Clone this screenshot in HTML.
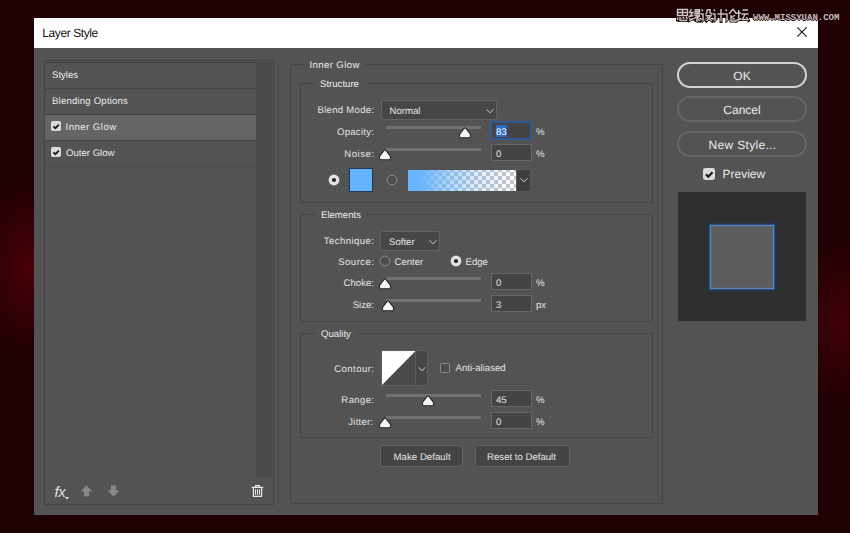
<!DOCTYPE html><html><head><meta charset="utf-8"><style>
html,body{margin:0;padding:0;width:850px;height:533px;overflow:hidden;background:#200104;}
body{position:relative;font-family:"Liberation Sans",sans-serif;}
.t{position:absolute;white-space:nowrap;font-family:"Liberation Sans",sans-serif;text-rendering:geometricPrecision;}
.b{position:absolute;}
</style></head><body>
<div class="b" style="left:0;top:0;width:850px;height:533px;background:radial-gradient(ellipse 55px 90px at 30px 268px, rgba(75,1,6,0.95), rgba(0,0,0,0) 100%), radial-gradient(ellipse 50px 85px at 842px 322px, rgba(70,1,6,0.85), rgba(0,0,0,0) 100%), #200104;"></div>
<div class="b" style="left:34px;top:18px;width:783.5px;height:497px;background:#535353;"></div>
<div class="b" style="left:34px;top:18px;width:783.5px;height:30px;background:#ffffff;"></div>
<div class="t" style="left:42.3px;top:26.84px;font-size:12px;line-height:12px;height:12px;color:#111111;letter-spacing:-0.42px;">Layer Style</div>
<svg class="b" style="left:796px;top:26px" width="12" height="12" viewBox="0 0 12 12"><path d="M1.3 1.3 L10.7 10.7 M10.7 1.3 L1.3 10.7" stroke="#111" stroke-width="1.1"/></svg>
<div class="b" style="left:44px;top:60px;width:230px;height:445px;border:1px solid #444444;box-sizing:border-box;"></div>
<div class="b" style="left:256px;top:62px;width:16px;height:415px;background:#4a4a4a;"></div>
<div class="b" style="left:45px;top:62px;width:211px;height:1px;background:#444444;"></div>
<div class="b" style="left:45px;top:88px;width:211px;height:1px;background:#434343;"></div>
<div class="b" style="left:45px;top:114px;width:211px;height:1px;background:#434343;"></div>
<div class="b" style="left:45px;top:115px;width:211px;height:25px;background:#656565;"></div>
<div class="b" style="left:45px;top:140px;width:211px;height:1px;background:#434343;"></div>
<div class="b" style="left:45px;top:166px;width:211px;height:1px;background:#4a4a4a;"></div>
<div class="t" style="left:52px;top:70.87px;font-size:9.6px;line-height:9.6px;height:9.6px;color:#ececec;letter-spacing:0px;">Styles</div>
<div class="t" style="left:52px;top:96.87px;font-size:9.6px;line-height:9.6px;height:9.6px;color:#ececec;letter-spacing:0.19px;">Blending Options</div>
<svg class="b" style="left:51px;top:121px" width="10" height="10" viewBox="0 0 10 10"><rect x="0" y="0" width="10" height="10" rx="1.8" fill="#dadada"/><path d="M2.4 5.3 L4.4 7.2 L7.9 3.6" fill="none" stroke="#1a1a1a" stroke-width="1.8"/></svg>
<div class="t" style="left:65.5px;top:122.87px;font-size:9.6px;line-height:9.6px;height:9.6px;color:#ececec;letter-spacing:0.47px;">Inner Glow</div>
<svg class="b" style="left:51px;top:147px" width="10" height="10" viewBox="0 0 10 10"><rect x="0" y="0" width="10" height="10" rx="1.8" fill="#dadada"/><path d="M2.4 5.3 L4.4 7.2 L7.9 3.6" fill="none" stroke="#1a1a1a" stroke-width="1.8"/></svg>
<div class="t" style="left:66px;top:148.87px;font-size:9.6px;line-height:9.6px;height:9.6px;color:#ececec;letter-spacing:0px;">Outer Glow</div>
<div class="t" style="left:54.5px;top:484.5px;font-size:15px;line-height:15px;height:15px;color:#e0e0e0;font-style:italic;font-family:'Liberation Sans',sans-serif;letter-spacing:-0.3px;">fx</div>
<svg class="b" style="left:64.5px;top:497px" width="4" height="3" viewBox="0 0 4 3"><path d="M0 0 L4 0 L2 2.5Z" fill="#e8e8e8"/></svg>
<svg class="b" style="left:80px;top:484.5px" width="13" height="12" viewBox="0 0 13 12"><path d="M6.5 0.5 L12.5 6.5 L9 6.5 L9 11.5 L4 11.5 L4 6.5 L0.5 6.5Z" fill="#888"/></svg>
<svg class="b" style="left:107px;top:485px" width="13" height="12" viewBox="0 0 13 12"><path d="M6.5 11.5 L12.5 5.5 L9 5.5 L9 0.5 L4 0.5 L4 5.5 L0.5 5.5Z" fill="#888"/></svg>
<svg class="b" style="left:251px;top:484px" width="13" height="14" viewBox="0 0 13 14"><path d="M0.8 3.4 H12.2 M4.6 3.2 V1.6 H8.4 V3.2 M2.4 3.6 V12.4 H10.6 V3.6" fill="none" stroke="#e8e8e8" stroke-width="1.2"/><path d="M4.5 5.2 V10.8 M6.5 5.2 V10.8 M8.5 5.2 V10.8" fill="none" stroke="#e8e8e8" stroke-width="1"/></svg>
<div class="b" style="left:290px;top:64px;width:373px;height:440px;border:1px solid #444444;box-sizing:border-box;"></div>
<div class="b" style="left:304.5px;top:63px;width:60px;height:3px;background:#535353;"></div>
<div class="t" style="left:309.5px;top:60.87px;font-size:9.6px;line-height:9.6px;height:9.6px;color:#ececec;letter-spacing:0.39px;">Inner Glow</div>
<div class="b" style="left:300px;top:83px;width:353px;height:120px;border:1px solid #444444;box-sizing:border-box;"></div>
<div class="b" style="left:315px;top:82px;width:52px;height:3px;background:#535353;"></div>
<div class="t" style="left:320px;top:79.87px;font-size:9.6px;line-height:9.6px;height:9.6px;color:#ececec;letter-spacing:0px;">Structure</div>
<div class="t" style="right:475.74px;top:105.87px;font-size:9.6px;line-height:9.6px;height:9.6px;color:#e4e4e4;letter-spacing:0.26px;">Blend Mode:</div>
<div class="b" style="left:381px;top:100px;width:116px;height:20px;background:#464646;border:1px solid #626262;box-sizing:border-box;border-radius:2px;"></div>
<div class="t" style="left:389.5px;top:106.87px;font-size:9.6px;line-height:9.6px;height:9.6px;color:#e6e6e6;letter-spacing:0px;">Normal</div>
<svg class="b" style="left:484.5px;top:107px" width="10" height="8" viewBox="0 0 10 8"><path d="M1.5 2.3 L5 5.8 L8.5 2.3" fill="none" stroke="#d0d0d0" stroke-width="1"/></svg>
<div class="t" style="right:475.73px;top:127.87px;font-size:9.6px;line-height:9.6px;height:9.6px;color:#e4e4e4;letter-spacing:0.27px;">Opacity:</div>
<div class="b" style="left:386px;top:126px;width:95px;height:3px;background:#717171;"></div>
<svg class="b" style="left:458px;top:127px" width="14" height="12" viewBox="0 0 14 12"><path d="M7 1 C7.5 1 7.8 1.3 8.1 1.7 L11.9 6.6 C12.3 7.1 12.5 7.5 12.5 8.1 L12.5 9.3 C12.5 10.3 12 10.8 11 10.8 L3 10.8 C2 10.8 1.5 10.3 1.5 9.3 L1.5 8.1 C1.5 7.5 1.7 7.1 2.1 6.6 L5.9 1.7 C6.2 1.3 6.5 1 7 1Z" fill="#f4f4f4" stroke="#262626" stroke-width="1.1"/></svg>
<div class="b" style="left:490px;top:121px;width:42px;height:19px;border:2px solid #2c5a96;box-sizing:border-box;background:#444444;"></div>
<div class="b" style="left:496px;top:125px;width:11px;height:12px;background:#2d6cc6;"></div>
<div class="t" style="left:496px;top:127.87px;font-size:9.6px;line-height:9.6px;height:9.6px;color:#ffffff;letter-spacing:0px;">83</div>
<div class="t" style="left:536px;top:127.87px;font-size:9.6px;line-height:9.6px;height:9.6px;color:#e4e4e4;letter-spacing:0px;">%</div>
<div class="t" style="right:475.50px;top:149.87px;font-size:9.6px;line-height:9.6px;height:9.6px;color:#e4e4e4;letter-spacing:0.5px;">Noise:</div>
<div class="b" style="left:386px;top:148px;width:95px;height:3px;background:#717171;"></div>
<svg class="b" style="left:378px;top:149px" width="14" height="12" viewBox="0 0 14 12"><path d="M7 1 C7.5 1 7.8 1.3 8.1 1.7 L11.9 6.6 C12.3 7.1 12.5 7.5 12.5 8.1 L12.5 9.3 C12.5 10.3 12 10.8 11 10.8 L3 10.8 C2 10.8 1.5 10.3 1.5 9.3 L1.5 8.1 C1.5 7.5 1.7 7.1 2.1 6.6 L5.9 1.7 C6.2 1.3 6.5 1 7 1Z" fill="#f4f4f4" stroke="#262626" stroke-width="1.1"/></svg>
<div class="b" style="left:491px;top:144px;width:41px;height:17px;background:#444444;border:1px solid #666666;box-sizing:border-box;"></div>
<div class="t" style="left:496px;top:149.87px;font-size:9.6px;line-height:9.6px;height:9.6px;color:#e4e4e4;letter-spacing:0px;">0</div>
<div class="t" style="left:536px;top:149.87px;font-size:9.6px;line-height:9.6px;height:9.6px;color:#e4e4e4;letter-spacing:0px;">%</div>
<svg class="b" style="left:327.5px;top:174px" width="12" height="12" viewBox="0 0 12 12"><circle cx="6" cy="6" r="5.4" fill="#e2e2e2"/><circle cx="6" cy="6" r="2.1" fill="#262626"/></svg>
<div class="b" style="left:349px;top:168px;width:24px;height:24px;background:#1e3650;"></div>
<div class="b" style="left:350px;top:169px;width:22px;height:22px;background:#66b4ff;"></div>
<svg class="b" style="left:385.5px;top:174px" width="12" height="12" viewBox="0 0 12 12"><circle cx="6" cy="6" r="4.9" fill="#4c4c4c" stroke="#8c8c8c" stroke-width="1"/></svg>
<div class="b" style="left:408px;top:170px;width:108px;height:21px;background:linear-gradient(to right, rgba(102,180,255,1) 0%, rgba(102,180,255,0.97) 12%, rgba(102,180,255,0.62) 32%, rgba(102,180,255,0.25) 62%, rgba(102,180,255,0) 100%), repeating-conic-gradient(#c6c6c6 0 25%, #ffffff 0 50%) 2px 2px/8px 8px;"></div>
<div class="b" style="left:516px;top:169px;width:15px;height:23px;background:#3e3e3e;border:1px solid #585858;box-sizing:border-box;"></div>
<svg class="b" style="left:518.5px;top:176px" width="10" height="8" viewBox="0 0 10 8"><path d="M1.5 2.3 L5 5.8 L8.5 2.3" fill="none" stroke="#d0d0d0" stroke-width="1"/></svg>
<div class="b" style="left:300px;top:214px;width:353px;height:108px;border:1px solid #444444;box-sizing:border-box;"></div>
<div class="b" style="left:316px;top:213px;width:50px;height:3px;background:#535353;"></div>
<div class="t" style="left:321px;top:210.87px;font-size:9.6px;line-height:9.6px;height:9.6px;color:#ececec;letter-spacing:0px;">Elements</div>
<div class="t" style="right:475.56px;top:236.87px;font-size:9.6px;line-height:9.6px;height:9.6px;color:#e4e4e4;letter-spacing:0.44px;">Technique:</div>
<div class="b" style="left:380px;top:231px;width:60px;height:20px;background:#464646;border:1px solid #626262;box-sizing:border-box;border-radius:2px;"></div>
<div class="t" style="left:389px;top:237.87px;font-size:9.6px;line-height:9.6px;height:9.6px;color:#e6e6e6;letter-spacing:0px;">Softer</div>
<svg class="b" style="left:427.5px;top:237.5px" width="10" height="8" viewBox="0 0 10 8"><path d="M1.5 2.3 L5 5.8 L8.5 2.3" fill="none" stroke="#d0d0d0" stroke-width="1"/></svg>
<div class="t" style="right:475.55px;top:257.87px;font-size:9.6px;line-height:9.6px;height:9.6px;color:#e4e4e4;letter-spacing:0.45px;">Source:</div>
<svg class="b" style="left:378.5px;top:255px" width="12" height="12" viewBox="0 0 12 12"><circle cx="6" cy="6" r="4.9" fill="#4c4c4c" stroke="#8c8c8c" stroke-width="1"/></svg>
<div class="t" style="left:394.5px;top:257.87px;font-size:9.6px;line-height:9.6px;height:9.6px;color:#e4e4e4;letter-spacing:0px;">Center</div>
<svg class="b" style="left:449.5px;top:255px" width="12" height="12" viewBox="0 0 12 12"><circle cx="6" cy="6" r="5.4" fill="#e2e2e2"/><circle cx="6" cy="6" r="2.1" fill="#262626"/></svg>
<div class="t" style="left:465.5px;top:257.87px;font-size:9.6px;line-height:9.6px;height:9.6px;color:#e4e4e4;letter-spacing:0px;">Edge</div>
<div class="t" style="right:476.00px;top:278.87px;font-size:9.6px;line-height:9.6px;height:9.6px;color:#e4e4e4;letter-spacing:0px;">Choke:</div>
<div class="b" style="left:386px;top:277px;width:95px;height:3px;background:#717171;"></div>
<svg class="b" style="left:378px;top:278px" width="14" height="12" viewBox="0 0 14 12"><path d="M7 1 C7.5 1 7.8 1.3 8.1 1.7 L11.9 6.6 C12.3 7.1 12.5 7.5 12.5 8.1 L12.5 9.3 C12.5 10.3 12 10.8 11 10.8 L3 10.8 C2 10.8 1.5 10.3 1.5 9.3 L1.5 8.1 C1.5 7.5 1.7 7.1 2.1 6.6 L5.9 1.7 C6.2 1.3 6.5 1 7 1Z" fill="#f4f4f4" stroke="#262626" stroke-width="1.1"/></svg>
<div class="b" style="left:491px;top:273px;width:41px;height:17px;background:#444444;border:1px solid #666666;box-sizing:border-box;"></div>
<div class="t" style="left:496px;top:278.87px;font-size:9.6px;line-height:9.6px;height:9.6px;color:#e4e4e4;letter-spacing:0px;">0</div>
<div class="t" style="left:536px;top:278.87px;font-size:9.6px;line-height:9.6px;height:9.6px;color:#e4e4e4;letter-spacing:0px;">%</div>
<div class="t" style="right:476.00px;top:300.87px;font-size:9.6px;line-height:9.6px;height:9.6px;color:#e4e4e4;letter-spacing:0px;">Size:</div>
<div class="b" style="left:386px;top:299px;width:95px;height:3px;background:#717171;"></div>
<svg class="b" style="left:380.5px;top:300px" width="14" height="12" viewBox="0 0 14 12"><path d="M7 1 C7.5 1 7.8 1.3 8.1 1.7 L11.9 6.6 C12.3 7.1 12.5 7.5 12.5 8.1 L12.5 9.3 C12.5 10.3 12 10.8 11 10.8 L3 10.8 C2 10.8 1.5 10.3 1.5 9.3 L1.5 8.1 C1.5 7.5 1.7 7.1 2.1 6.6 L5.9 1.7 C6.2 1.3 6.5 1 7 1Z" fill="#f4f4f4" stroke="#262626" stroke-width="1.1"/></svg>
<div class="b" style="left:491px;top:295px;width:41px;height:17px;background:#444444;border:1px solid #666666;box-sizing:border-box;"></div>
<div class="t" style="left:496px;top:300.87px;font-size:9.6px;line-height:9.6px;height:9.6px;color:#e4e4e4;letter-spacing:0px;">3</div>
<div class="t" style="left:536px;top:300.87px;font-size:9.6px;line-height:9.6px;height:9.6px;color:#e4e4e4;letter-spacing:0px;">px</div>
<div class="b" style="left:300px;top:333px;width:353px;height:105px;border:1px solid #444444;box-sizing:border-box;"></div>
<div class="b" style="left:316px;top:332px;width:41px;height:3px;background:#535353;"></div>
<div class="t" style="left:321px;top:329.87px;font-size:9.6px;line-height:9.6px;height:9.6px;color:#ececec;letter-spacing:0px;">Quality</div>
<div class="t" style="right:475.56px;top:364.87px;font-size:9.6px;line-height:9.6px;height:9.6px;color:#e4e4e4;letter-spacing:0.44px;">Contour:</div>
<div class="b" style="left:381px;top:350px;width:47px;height:36px;background:#4b4b4b;border:1px solid #5e5e5e;box-sizing:border-box;"></div>
<svg class="b" style="left:382px;top:351px" width="34" height="34" viewBox="0 0 34 34"><path d="M0 0 L33.5 0 L0 34Z" fill="#ffffff"/></svg>
<div class="b" style="left:415px;top:351px;width:1px;height:34px;background:#5e5e5e;"></div>
<div class="b" style="left:416px;top:351px;width:11px;height:34px;background:#464646;"></div>
<svg class="b" style="left:416.5px;top:364.5px" width="10" height="8" viewBox="0 0 10 8"><path d="M1.75 2.3 L5 5.8 L8.25 2.3" fill="none" stroke="#d0d0d0" stroke-width="1"/></svg>
<svg class="b" style="left:440px;top:363px" width="10" height="10" viewBox="0 0 10 10"><rect x="0.5" y="0.5" width="9" height="9" rx="1.5" fill="#4c4c4c" stroke="#8a8a8a" stroke-width="1"/></svg>
<div class="t" style="left:455.5px;top:363.87px;font-size:9.6px;line-height:9.6px;height:9.6px;color:#e4e4e4;letter-spacing:0px;">Anti-aliased</div>
<div class="t" style="right:475.66px;top:395.87px;font-size:9.6px;line-height:9.6px;height:9.6px;color:#e4e4e4;letter-spacing:0.34px;">Range:</div>
<div class="b" style="left:386px;top:394px;width:95px;height:3px;background:#717171;"></div>
<svg class="b" style="left:421px;top:395px" width="14" height="12" viewBox="0 0 14 12"><path d="M7 1 C7.5 1 7.8 1.3 8.1 1.7 L11.9 6.6 C12.3 7.1 12.5 7.5 12.5 8.1 L12.5 9.3 C12.5 10.3 12 10.8 11 10.8 L3 10.8 C2 10.8 1.5 10.3 1.5 9.3 L1.5 8.1 C1.5 7.5 1.7 7.1 2.1 6.6 L5.9 1.7 C6.2 1.3 6.5 1 7 1Z" fill="#f4f4f4" stroke="#262626" stroke-width="1.1"/></svg>
<div class="b" style="left:491px;top:390px;width:41px;height:17px;background:#444444;border:1px solid #666666;box-sizing:border-box;"></div>
<div class="t" style="left:496px;top:395.87px;font-size:9.6px;line-height:9.6px;height:9.6px;color:#e4e4e4;letter-spacing:0px;">45</div>
<div class="t" style="left:536px;top:395.87px;font-size:9.6px;line-height:9.6px;height:9.6px;color:#e4e4e4;letter-spacing:0px;">%</div>
<div class="t" style="right:476.80px;top:417.87px;font-size:9.6px;line-height:9.6px;height:9.6px;color:#e4e4e4;letter-spacing:0.2px;">Jitter:</div>
<div class="b" style="left:386px;top:416px;width:95px;height:3px;background:#717171;"></div>
<svg class="b" style="left:378px;top:417px" width="14" height="12" viewBox="0 0 14 12"><path d="M7 1 C7.5 1 7.8 1.3 8.1 1.7 L11.9 6.6 C12.3 7.1 12.5 7.5 12.5 8.1 L12.5 9.3 C12.5 10.3 12 10.8 11 10.8 L3 10.8 C2 10.8 1.5 10.3 1.5 9.3 L1.5 8.1 C1.5 7.5 1.7 7.1 2.1 6.6 L5.9 1.7 C6.2 1.3 6.5 1 7 1Z" fill="#f4f4f4" stroke="#262626" stroke-width="1.1"/></svg>
<div class="b" style="left:491px;top:412px;width:41px;height:17px;background:#444444;border:1px solid #666666;box-sizing:border-box;"></div>
<div class="t" style="left:496px;top:417.87px;font-size:9.6px;line-height:9.6px;height:9.6px;color:#e4e4e4;letter-spacing:0px;">0</div>
<div class="t" style="left:536px;top:417.87px;font-size:9.6px;line-height:9.6px;height:9.6px;color:#e4e4e4;letter-spacing:0px;">%</div>
<div class="b" style="left:380px;top:445px;width:83px;height:22px;background:#444444;border:1px solid #626262;box-sizing:border-box;border-radius:3px;"></div>
<div class="t" style="left:272.1px;width:300px;text-align:center;top:452.87px;font-size:9.6px;line-height:9.6px;height:9.6px;color:#e6e6e6;letter-spacing:0.04px;">Make Default</div>
<div class="b" style="left:475px;top:445px;width:95px;height:22px;background:#444444;border:1px solid #626262;box-sizing:border-box;border-radius:3px;"></div>
<div class="t" style="left:371.5px;width:300px;text-align:center;top:452.87px;font-size:9.6px;line-height:9.6px;height:9.6px;color:#e6e6e6;letter-spacing:0px;">Reset to Default</div>
<div class="b" style="left:677px;top:62px;width:130px;height:26px;border:2px solid #d4d4d4;box-sizing:border-box;border-radius:13px;"></div>
<div class="t" style="left:592px;width:300px;text-align:center;top:69.84px;font-size:12px;line-height:12px;height:12px;color:#ececec;letter-spacing:0px;">OK</div>
<div class="b" style="left:677px;top:96px;width:130px;height:26px;border:2px solid #666666;box-sizing:border-box;border-radius:13px;"></div>
<div class="t" style="left:592px;width:300px;text-align:center;top:103.84px;font-size:12px;line-height:12px;height:12px;color:#ececec;letter-spacing:0px;">Cancel</div>
<div class="b" style="left:677px;top:131px;width:130px;height:26px;border:2px solid #666666;box-sizing:border-box;border-radius:13px;"></div>
<div class="t" style="left:592.5px;width:300px;text-align:center;top:138.84px;font-size:12px;line-height:12px;height:12px;color:#ececec;letter-spacing:0.32px;">New Style...</div>
<svg class="b" style="left:703px;top:168px" width="12" height="12" viewBox="0 0 10 10"><rect x="0" y="0" width="10" height="10" rx="1.8" fill="#dadada"/><path d="M2.4 5.3 L4.4 7.2 L7.9 3.6" fill="none" stroke="#1a1a1a" stroke-width="1.8"/></svg>
<div class="t" style="left:722.5px;top:167.84px;font-size:12px;line-height:12px;height:12px;color:#ececec;letter-spacing:0px;">Preview</div>
<div class="b" style="left:678px;top:192px;width:128px;height:129px;background:#2f2f2f;"></div>
<div class="b" style="left:710px;top:225px;width:64px;height:64px;background:#5c5c5c;border:1px solid #5f86b3;box-sizing:border-box;box-shadow:0 0 0 1px #23507f, 0 0 3px 2px rgba(20,70,140,0.45), inset 0 0 2px 1px rgba(90,120,160,0.35);"></div>
<svg class="b" style="left:676px;top:8px" width="74" height="15" viewBox="0 0 74 15"><g transform="translate(0.5,1)"><path d="M1 0.5 H11 V6.5 H1 Z M6 0.5 V6.5 M1 3.5 H11 M1.5 8.5 L1 11 M3.5 8 V11.5 H10 V10.5 M6.5 8 L7.5 10 M9.5 8 L11 10" fill="none" stroke="#140406" stroke-width="3" stroke-linecap="square"/></g><g transform="translate(12.5,1)"><path d="M3 0 L1 3.5 H4.5 L1 7.5 L5 6.5 M0.5 11.5 L5 9.5 M6 0.8 H11 V4.2 H6 M6 2.5 H11 M5.5 6 H11.5 M8.5 6 V12 L7.5 11.5 M8 7.5 L5.5 10 M8.5 8.5 L11.5 7 M9 9.5 L11.5 12" fill="none" stroke="#140406" stroke-width="3" stroke-linecap="square"/></g><g transform="translate(24.5,1)"><path d="M1 0.5 L2.5 2 M0 5 H2.5 V11 L3.5 10 M6.5 0.8 V3.5 L5 5.5 M6.5 0.8 H9.5 V4 L11.5 5 M5 6.8 H10.5 L6 12 M6.5 8 L11.5 12" fill="none" stroke="#140406" stroke-width="3" stroke-linecap="square"/></g><g transform="translate(36.5,1)"><path d="M1 0.5 L2.5 2 M0 5 H2.5 V11 L3.5 10 M5 5 H12 M8.5 0 V12.5" fill="none" stroke="#140406" stroke-width="3" stroke-linecap="square"/></g><g transform="translate(48.5,1)"><path d="M1 0.5 L2.5 2 M0 5 H2.5 V11 L3.5 10 M8.5 0 L4.5 5 M8.5 0 L12 5 M6.5 6 V12 H11.5 V10.5 M10.5 6 L6.5 9" fill="none" stroke="#140406" stroke-width="3" stroke-linecap="square"/></g><g transform="translate(60.5,1)"><path d="M0 4 H4.5 M2.2 1 V10 M0 11.5 L5 9.5 M6 1 H11.5 M5 5 H12 M8.5 5 L6 10.5 H11 M10 8 L12 11.5" fill="none" stroke="#140406" stroke-width="3" stroke-linecap="square"/></g><g transform="translate(0.5,1)"><path d="M1 0.5 H11 V6.5 H1 Z M6 0.5 V6.5 M1 3.5 H11 M1.5 8.5 L1 11 M3.5 8 V11.5 H10 V10.5 M6.5 8 L7.5 10 M9.5 8 L11 10" fill="none" stroke="#cdc1c1" stroke-width="1.4"/></g><g transform="translate(12.5,1)"><path d="M3 0 L1 3.5 H4.5 L1 7.5 L5 6.5 M0.5 11.5 L5 9.5 M6 0.8 H11 V4.2 H6 M6 2.5 H11 M5.5 6 H11.5 M8.5 6 V12 L7.5 11.5 M8 7.5 L5.5 10 M8.5 8.5 L11.5 7 M9 9.5 L11.5 12" fill="none" stroke="#cdc1c1" stroke-width="1.4"/></g><g transform="translate(24.5,1)"><path d="M1 0.5 L2.5 2 M0 5 H2.5 V11 L3.5 10 M6.5 0.8 V3.5 L5 5.5 M6.5 0.8 H9.5 V4 L11.5 5 M5 6.8 H10.5 L6 12 M6.5 8 L11.5 12" fill="none" stroke="#cdc1c1" stroke-width="1.4"/></g><g transform="translate(36.5,1)"><path d="M1 0.5 L2.5 2 M0 5 H2.5 V11 L3.5 10 M5 5 H12 M8.5 0 V12.5" fill="none" stroke="#cdc1c1" stroke-width="1.4"/></g><g transform="translate(48.5,1)"><path d="M1 0.5 L2.5 2 M0 5 H2.5 V11 L3.5 10 M8.5 0 L4.5 5 M8.5 0 L12 5 M6.5 6 V12 H11.5 V10.5 M10.5 6 L6.5 9" fill="none" stroke="#cdc1c1" stroke-width="1.4"/></g><g transform="translate(60.5,1)"><path d="M0 4 H4.5 M2.2 1 V10 M0 11.5 L5 9.5 M6 1 H11.5 M5 5 H12 M8.5 5 L6 10.5 H11 M10 8 L12 11.5" fill="none" stroke="#cdc1c1" stroke-width="1.4"/></g></svg>
<div class="t" style="left:753px;top:14px;font-size:9px;line-height:9px;height:9px;color:#c9bdbd;font-family:'Liberation Mono',monospace;font-weight:bold;letter-spacing:0px;text-shadow:1px 0 0 #140406,-1px 0 0 #140406,0 1px 0 #140406,0 -1px 0 #140406;">WWW.MISSYUAN.COM</div>
</body></html>
